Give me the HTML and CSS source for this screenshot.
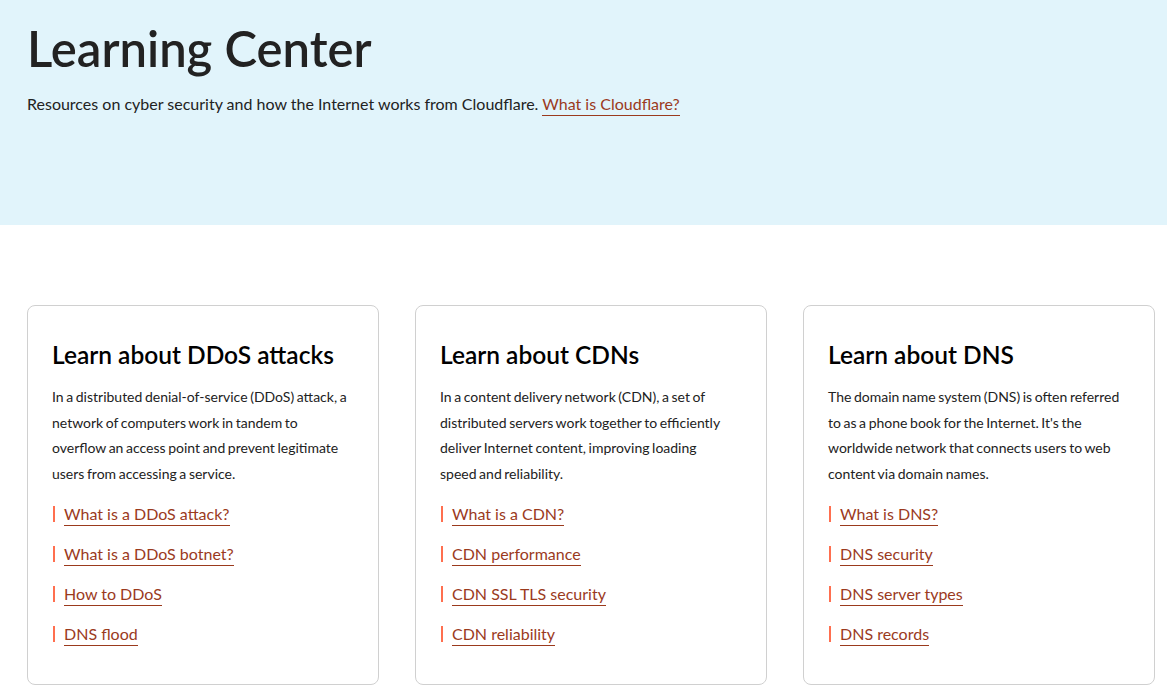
FILE: index.html
```
<!DOCTYPE html>
<html lang="en">
<head>
    <meta charset="UTF-8">
    <meta name="viewport" content="width=device-width, initial-scale=1.0">
    <title>Learning Center | Cloudflare</title>
    <link rel="stylesheet" href="styles.css">
</head>
<body>
    <header class="hero">
        <h1>Learning Center</h1>
        <p>Resources on cyber security and how the Internet works from Cloudflare. <a href="#">What is Cloudflare?</a></p>
    </header>

    <main class="topics">
        <section class="card">
            <h2>Learn about DDoS attacks</h2>
            <p>In a distributed denial-of-service (DDoS) attack, a network of computers work in tandem to overflow an access point and prevent legitimate users from accessing a service.</p>
            <ul class="links">
                <li><a href="#">What is a DDoS attack?</a></li>
                <li><a href="#">What is a DDoS botnet?</a></li>
                <li><a href="#">How to DDoS</a></li>
                <li><a href="#">DNS flood</a></li>
            </ul>
        </section>

        <section class="card">
            <h2>Learn about CDNs</h2>
            <p>In a content delivery network (CDN), a set of distributed servers work together to efficiently deliver Internet content, improving loading speed and reliability.</p>
            <ul class="links">
                <li><a href="#">What is a CDN?</a></li>
                <li><a href="#">CDN performance</a></li>
                <li><a href="#">CDN SSL TLS security</a></li>
                <li><a href="#">CDN reliability</a></li>
            </ul>
        </section>

        <section class="card">
            <h2>Learn about DNS</h2>
            <p>The domain name system (DNS) is often referred to as a phone book for the Internet. It's the worldwide network that connects users to web content via domain names.</p>
            <ul class="links">
                <li><a href="#">What is DNS?</a></li>
                <li><a href="#">DNS security</a></li>
                <li><a href="#">DNS server types</a></li>
                <li><a href="#">DNS records</a></li>
            </ul>
        </section>
    </main>
</body>
</html>
```

FILE: styles.css
```
body {
    font-family: Lato, "Noto Sans", sans-serif;
    margin: 0;
    padding: 0;
    color: #222;
    background: white;
}

a {
    color: #9b3a1d;
    text-decoration: none;
    border-bottom: 1px solid #9b3a1d;
    padding-bottom: 2px;
}

.hero {
    background: #e1f4fb;
    height: 225px;
    box-sizing: border-box;
    padding: 18px 27px 0;
}

.hero h1 {
    font-size: 49px;
    font-weight: 600;
    line-height: 60px;
    margin: 0;
    color: #222;
}

.hero p {
    font-size: 16px;
    margin: 16px 0 0;
    color: #222;
}

.topics {
    display: grid;
    grid-template-columns: repeat(3, 352px);
    gap: 36px;
    padding: 80px 27px 8px;
}

.card {
    border: 1px solid #d0d0d0;
    border-radius: 8px;
    padding: 32px 24px 28px;
    height: 380px;
    box-sizing: border-box;
}

.card h2 {
    font-size: 24.5px;
    font-weight: 600;
    margin: 0 0 12px;
    color: #000;
    line-height: 34px;
}

.card p {
    font-size: 14px;
    line-height: 25.5px;
    word-spacing: -1px;
    max-width: 295.35px;
    margin: 0 0 16px;
    color: #222;
}

.links {
    list-style: none;
    margin: 0;
    padding: 0;
}

.links li {
    font-size: 16px;
    line-height: 24px;
    height: 40px;
}

.links li::before {
    content: "";
    display: inline-block;
    width: 2px;
    height: 16px;
    background: #ff6f4f;
    margin: 0 9px 0 1px;
    vertical-align: -2px;
}
```
